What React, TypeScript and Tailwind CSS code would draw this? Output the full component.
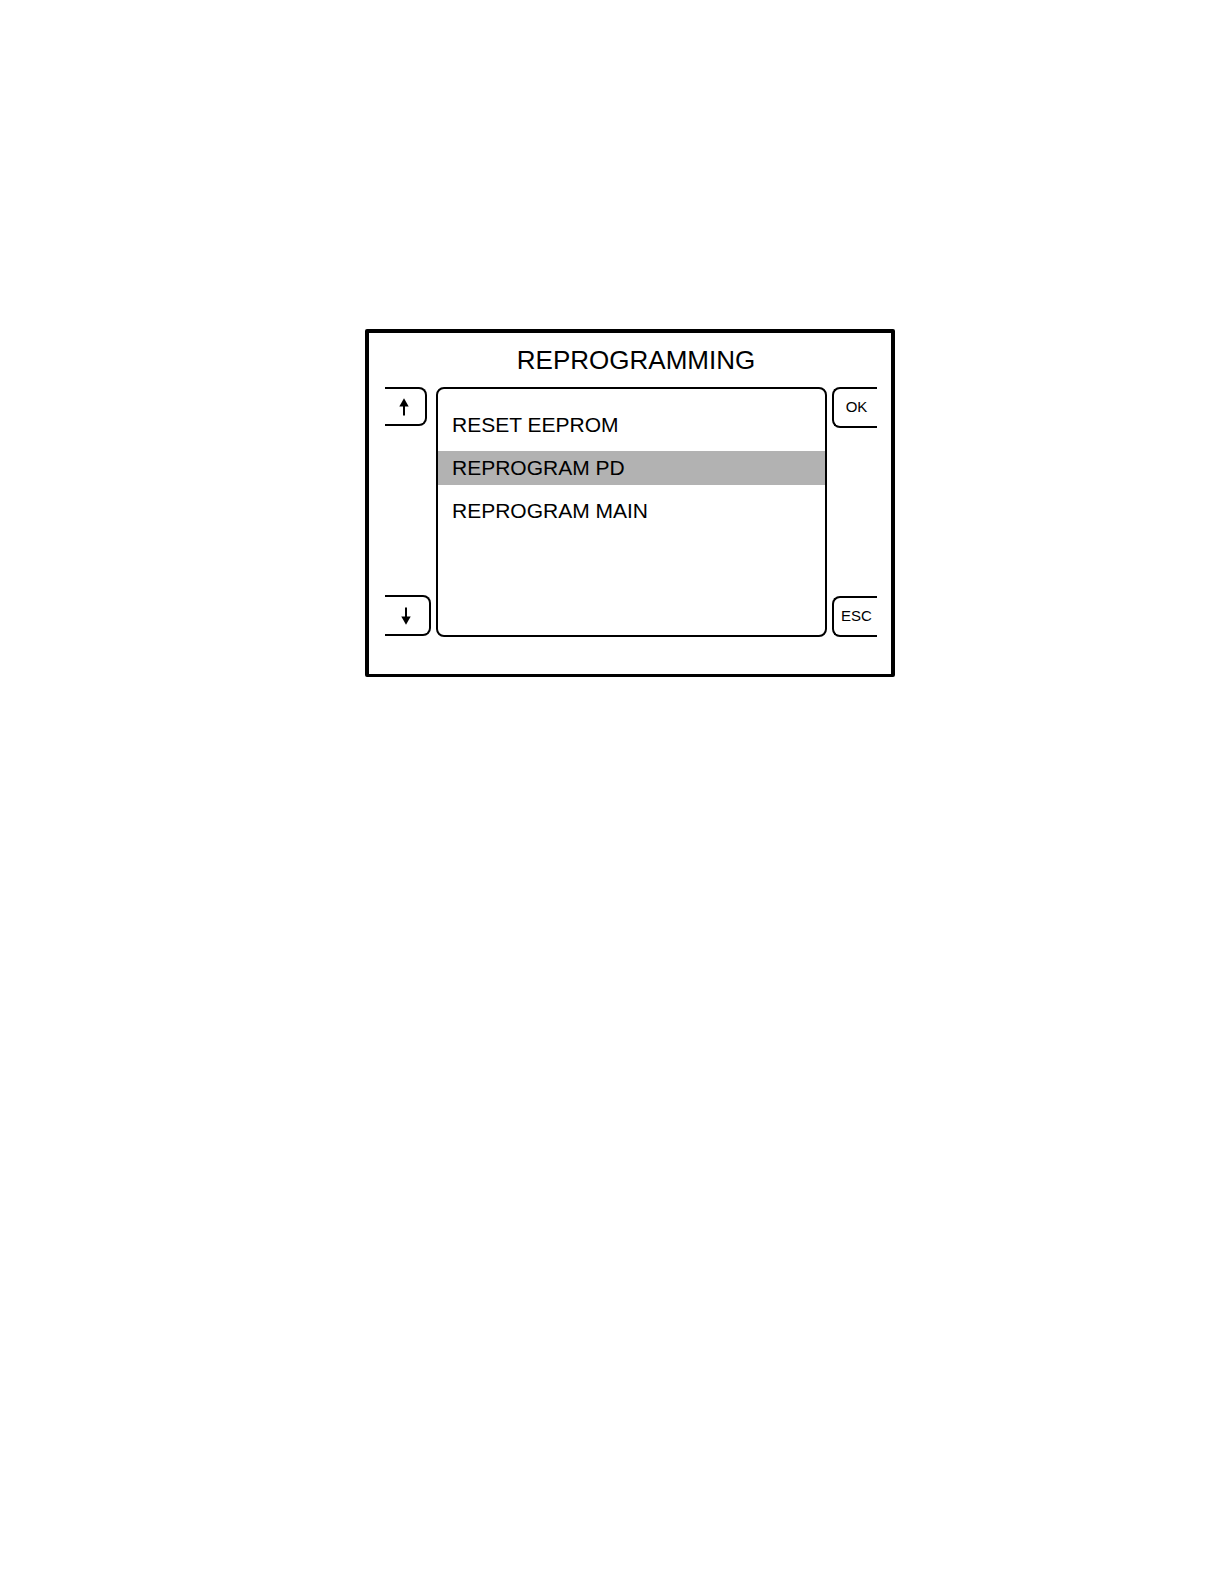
import { useState } from "react"
import clsx from "clsx"

const menuItems = ["RESET EEPROM", "REPROGRAM PD", "REPROGRAM MAIN"]

const ArrowIcon = ({ className }: { className?: string }) => (
    <svg className={className} width="10" height="18" viewBox="0 0 10 18" aria-hidden="true">
        <path d="M5 0.2 L9.7 8.5 H0.3 Z" fill="#000" />
        <rect x="4" y="7" width="2" height="10.5" fill="#000" />
    </svg>
)

const App = () => {
    const [selected, setSelected] = useState(1)

    const moveUp = () => setSelected((i) => Math.max(0, i - 1))
    const moveDown = () => setSelected((i) => Math.min(menuItems.length - 1, i + 1))

    return (
        <main className="min-h-screen bg-white pt-[329px] pl-9 font-['Liberation_Sans',Arial,sans-serif] text-black">
            <section className="mx-auto max-w-[530px] rounded-[2px] border-4 border-b-3 border-black pr-3.5 pb-[37px] pl-4">
                <h1 className="pl-2.5 text-center text-[26px] leading-[54px]">REPROGRAMMING</h1>
                <div className="flex">
                    <div className="flex w-[51px] flex-col items-start justify-between pb-px">
                        <button
                            type="button"
                            aria-label="Up"
                            onClick={moveUp}
                            className="flex h-[39px] w-[42px] items-center justify-center rounded-r-lg border-2 border-l-0 border-black pr-0.5"
                        >
                            <ArrowIcon />
                        </button>
                        <button
                            type="button"
                            aria-label="Down"
                            onClick={moveDown}
                            className="flex h-[41px] w-[46px] items-center justify-center rounded-r-lg border-2 border-l-0 border-black pr-0.5"
                        >
                            <ArrowIcon className="rotate-180" />
                        </button>
                    </div>
                    <ul className="flex min-h-[250px] flex-1 flex-col gap-[9px] rounded-lg border-2 border-black pt-[19px]">
                        {
                            menuItems.map((item, i) => (
                                <li key={item}>
                                    <button
                                        type="button"
                                        onClick={() => setSelected(i)}
                                        className={clsx(
                                            "block w-full pl-3.5 text-left text-[21px] leading-[34px]",
                                            i === selected && "bg-[#b2b2b2]"
                                        )}
                                    >
                                        {item}
                                    </button>
                                </li>
                            ))
                        }
                    </ul>
                    <div className="ml-[5px] flex w-[45px] flex-col justify-between">
                        <button type="button" className="h-[41px] rounded-l-lg border-2 border-r-0 border-black pl-0.5 text-[15px]">
                            OK
                        </button>
                        <button type="button" className="h-[41px] rounded-l-lg border-2 border-r-0 border-black pl-0.5 text-[15px]">
                            ESC
                        </button>
                    </div>
                </div>
            </section>
        </main>
    )
}

export default App
